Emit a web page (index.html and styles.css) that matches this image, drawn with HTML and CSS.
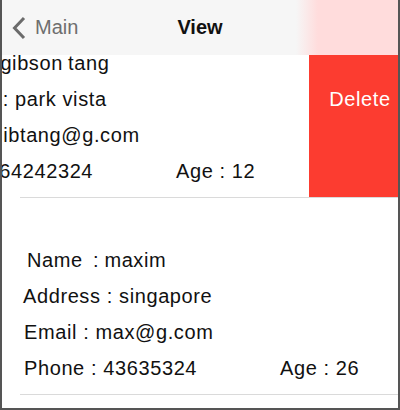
FILE: index.html
```html
<!DOCTYPE html>
<html lang="en">
<head>
<meta charset="utf-8">
<title>View</title>
<link rel="stylesheet" href="styles.css">
</head>
<body>
<div class="screen">
  <header class="navbar">
    <a class="back" href="#">
      <svg class="chevron" width="14" height="24" viewBox="0 0 14 24" aria-hidden="true">
        <path d="M12 2 L2.5 12 L12 22" fill="none" stroke="#6b6b6b" stroke-width="3" stroke-linejoin="miter" stroke-linecap="butt"/>
      </svg>
      <span class="back-label">Main</span>
    </a>
    <h1 class="title">View</h1>
  </header>
  <ul class="list">
    <li class="cell cell--swiped">
      <div class="cell-content">
        <div class="line line--name">Name  : gibson tang</div>
        <div class="line line--address">Address : park vista</div>
        <div class="line line--email">Email : gibtang@g.com</div>
        <div class="line line--phone"><span>Phone : 64242324</span><span>Age : 12</span></div>
      </div>
      <button class="delete" type="button">Delete</button>
    </li>
    <li class="cell">
      <div class="cell-content">
        <div class="line line--name">Name  : maxim</div>
        <div class="line line--address">Address : singapore</div>
        <div class="line line--email">Email : max@g.com</div>
        <div class="line line--phone"><span>Phone : 43635324</span><span>Age : 26</span></div>
      </div>
    </li>
  </ul>
</div>
</body>
</html>
```
FILE: styles.css
```css
* { box-sizing: border-box; }

html, body {
  margin: 0;
  padding: 0;
  background: #ffffff;
}

body {
  font-family: "Liberation Sans", Arial, Helvetica, sans-serif;
  color: #111111;
}

.screen {
  position: relative;
  width: 400px;
  height: 410px;
  overflow: hidden;
  background: #ffffff;
  border-left: 2px solid #555555;
  border-right: 2px solid #555555;
  border-bottom: 2px solid #555555;
}

.navbar {
  position: absolute;
  top: 0;
  left: 0;
  right: 0;
  height: 55px;
  z-index: 2;
  display: grid;
  grid-template-columns: 1fr auto 1fr;
  align-items: center;
  background: linear-gradient(to right, #f6f6f6 0, #f6f6f6 294px, #ffdcdc 316px, #ffdcdc 100%);
}

.back {
  display: flex;
  align-items: center;
  gap: 9px;
  padding-left: 10px;
  text-decoration: none;
  color: #6e6e6e;
  font-size: 20px;
}

.chevron { display: block; }

.title {
  margin: 0;
  font-size: 20px;
  font-weight: bold;
  color: #111111;
}

.list {
  list-style: none;
  margin: 0;
  padding: 1px 0 0 0;
}

.cell {
  position: relative;
  display: flex;
  height: 197px;
  overflow: hidden;
}

.cell::after {
  content: "";
  position: absolute;
  left: 18px;
  right: 0;
  bottom: 0;
  height: 1px;
  background: #dadada;
}

.cell-content {
  flex: 1 1 auto;
  padding-top: 44px;
  font-size: 20px;
  line-height: 36px;
  letter-spacing: 0.6px;
}

.cell--swiped .cell-content {
  flex: 0 0 411px;
  margin-left: -104px;
}

.line {
  padding-left: 22px;
  white-space: pre;
}
.line--name { padding-left: 25px; word-spacing: -1px; }
.line--address { padding-left: 21px; }
.line--email { padding-left: 22px; }

.line--phone {
  display: grid;
  grid-template-columns: 256px auto;
}

.delete {
  flex: 0 0 102px;
  height: 196px;
  border: none;
  margin: 0;
  padding: 0;
  background: #fc3c30;
  color: #ffffff;
  font-family: inherit;
  font-size: 20px;
  letter-spacing: 0.6px;
  display: flex;
  align-items: center;
  justify-content: center;
}
```
